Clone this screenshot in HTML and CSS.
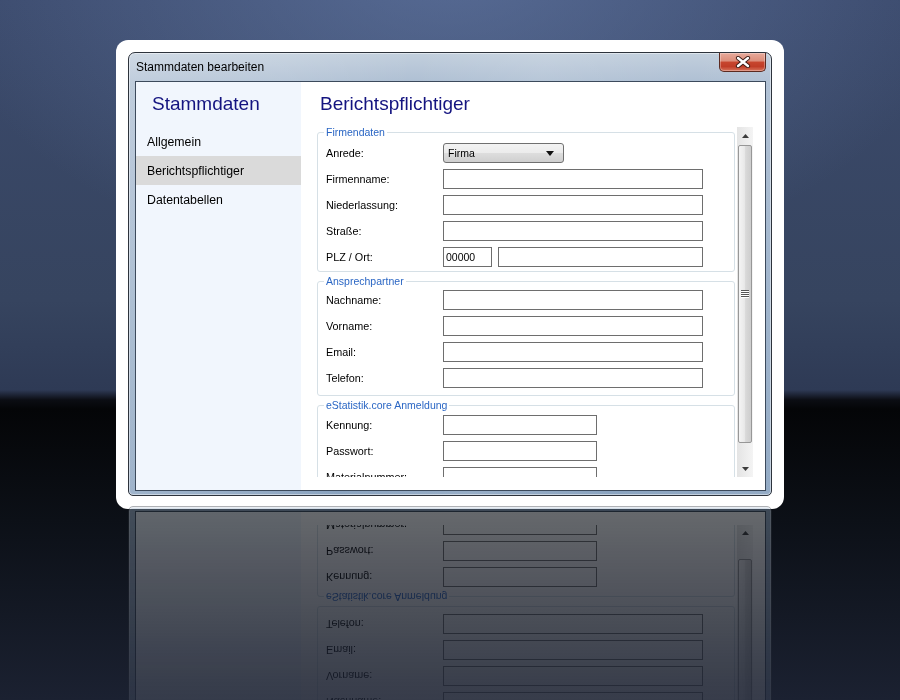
FILE: index.html
```html
<!DOCTYPE html>
<html lang="de">
<head>
<meta charset="utf-8">
<title>Stammdaten bearbeiten</title>
<link rel="stylesheet" href="styles.css">
</head>
<body>
<div class="stage">
  <div class="card">
    <div class="window">
      <div class="titlebar">
        <span class="title">Stammdaten bearbeiten</span>
        <button class="close" type="button" aria-label="Schließen">
          <svg width="16" height="12" viewBox="0 0 16 12">
            <path d="M3 2 L13 10 M13 2 L3 10" stroke="#3a1a14" stroke-width="4.2" stroke-linecap="round" fill="none"/>
            <path d="M3 2 L13 10 M13 2 L3 10" stroke="#ffffff" stroke-width="2.4" stroke-linecap="round" fill="none"/>
          </svg>
        </button>
      </div>
      <div class="client">
        <nav class="nav">
          <h2 class="nav-title">Stammdaten</h2>
          <ul class="nav-list">
            <li class="nav-item">Allgemein</li>
            <li class="nav-item active">Berichtspflichtiger</li>
            <li class="nav-item">Datentabellen</li>
          </ul>
        </nav>
        <main class="main">
          <h1 class="main-title">Berichtspflichtiger</h1>
          <div class="scroller">
            <div class="scroll-content">
              <fieldset class="group g1">
                <legend>Firmendaten</legend>
                <div class="row"><label class="lbl">Anrede:</label>
                  <div class="combo"><span>Firma</span>
                    <svg width="8" height="5" viewBox="0 0 8 5"><path d="M0 0 H8 L4 5 Z" fill="#111"/></svg>
                  </div>
                </div>
                <div class="row"><label class="lbl">Firmenname:</label><div class="field w-full"></div></div>
                <div class="row"><label class="lbl">Niederlassung:</label><div class="field w-full"></div></div>
                <div class="row"><label class="lbl">Straße:</label><div class="field w-full"></div></div>
                <div class="row"><label class="lbl">PLZ / Ort:</label><div class="field w-plz">00000</div><div class="field w-ort"></div></div>
              </fieldset>
              <fieldset class="group g2">
                <legend>Ansprechpartner</legend>
                <div class="row"><label class="lbl">Nachname:</label><div class="field w-full"></div></div>
                <div class="row"><label class="lbl">Vorname:</label><div class="field w-full"></div></div>
                <div class="row"><label class="lbl">Email:</label><div class="field w-full"></div></div>
                <div class="row"><label class="lbl">Telefon:</label><div class="field w-full"></div></div>
              </fieldset>
              <fieldset class="group g3">
                <legend>eStatistik.core Anmeldung</legend>
                <div class="row"><label class="lbl">Kennung:</label><div class="field w-mid"></div></div>
                <div class="row"><label class="lbl">Passwort:</label><div class="field w-mid"></div></div>
                <div class="row"><label class="lbl">Materialnummer:</label><div class="field w-mid"></div></div>
              </fieldset>
            </div>
            <div class="scrollbar">
              <div class="sb-btn">
                <svg width="7" height="4" viewBox="0 0 7 4"><path d="M0 4 L3.5 0 L7 4 Z" fill="#3c3c3c"/></svg>
              </div>
              <div class="sb-track">
                <div class="sb-thumb">
                  <svg width="8" height="8" viewBox="0 0 8 8">
                    <path d="M0 0.5 H8 M0 2.5 H8 M0 4.5 H8 M0 6.5 H8" stroke="#555" stroke-width="1"/>
                    <path d="M0 1.5 H8 M0 3.5 H8 M0 5.5 H8 M0 7.5 H8" stroke="#fff" stroke-width="1"/>
                  </svg>
                </div>
              </div>
              <div class="sb-btn">
                <svg width="7" height="4" viewBox="0 0 7 4"><path d="M0 0 L7 0 L3.5 4 Z" fill="#3c3c3c"/></svg>
              </div>
            </div>
          </div>
        </main>
      </div>
    </div>
  </div>
</div>
</body>
</html>
```
FILE: styles.css
```css
html, body {
  margin: 0;
  padding: 0;
}

body {
  width: 900px;
  height: 700px;
  overflow: hidden;
  font-family: "Liberation Sans", Arial, sans-serif;
  background:
    radial-gradient(ellipse 520px 320px at 450px -40px, rgba(110, 134, 182, 0.55), rgba(110, 134, 182, 0) 100%),
    linear-gradient(to bottom, #3b4a6c 0px, #36445f 300px, #2e3a55 390px, #0b0d13 400px, #040507 409px, #0c1017 520px, #1b2131 700px);
}

.stage {
  display: flex;
  justify-content: center;
  padding-top: 40px;
}

.card {
  width: 668px;
  box-sizing: border-box;
  background: #ffffff;
  border-radius: 12px;
  padding: 12px 12px 13px;
}

.window {
  height: 444px;
  box-sizing: border-box;
  border: 1px solid #2d333c;
  border-radius: 7px 7px 5px 5px;
  background:
    linear-gradient(100deg, rgba(255,255,255,0.22) 0%, rgba(255,255,255,0.12) 22%, rgba(255,255,255,0) 40%, rgba(255,255,255,0.1) 58%, rgba(255,255,255,0) 78%, rgba(255,255,255,0.08) 100%),
    linear-gradient(to bottom, #c2cfdd 0px, #aebfd3 30px, #9ab0c9 250px, #8ba4c0 444px);
  box-shadow: inset 0 0 0 1px rgba(255, 255, 255, 0.45);
  display: flex;
  flex-direction: column;
  -webkit-box-reflect: below 10px linear-gradient(to bottom, rgba(0,0,0,0) 25%, rgba(0,0,0,0.14) 60%, rgba(0,0,0,0.38) 100%);
}

.titlebar {
  height: 28px;
  display: flex;
  align-items: flex-start;
  padding: 0 5px 0 7px;
}

.title {
  line-height: 29px;
  font-size: 12px;
  color: #000;
}

.close {
  margin-left: auto;
  width: 47px;
  height: 19px;
  padding: 0;
  box-sizing: border-box;
  border: 1px solid #5c2a20;
  border-top: none;
  border-radius: 0 0 5px 5px;
  background: linear-gradient(to bottom, #e8aa9b 0%, #dc8d7a 45%, #c7462e 50%, #c03d27 75%, #d7745c 100%);
  box-shadow: inset 0 0 0 1px rgba(255, 255, 255, 0.3);
  display: flex;
  align-items: center;
  justify-content: center;
}

.client {
  height: 410px;
  box-sizing: border-box;
  margin: 0 5px 0 6px;
  border: 1px solid #3c4a5c;
  background: #ffffff;
  display: flex;
}

.nav {
  width: 165px;
  background: #f1f6fd;
}

.nav-title {
  margin: 0;
  padding: 10px 0 0 16px;
  height: 24px;
  line-height: 24px;
  font-size: 19px;
  font-weight: normal;
  color: #141480;
}

.nav-list {
  list-style: none;
  margin: 11px 0 0;
  padding: 0;
}

.nav-item {
  height: 29px;
  line-height: 31px;
  padding-left: 11px;
  font-size: 12.3px;
  color: #000;
}

.nav-item.active {
  background: #dadada;
}

.main {
  flex: 1;
  padding: 10px 12px 0 16px;
  min-width: 0;
}

.main-title {
  margin: 0 0 0 3px;
  height: 24px;
  line-height: 24px;
  font-size: 19px;
  font-weight: normal;
  color: #141480;
}

.scroller {
  margin-top: 10px;
  height: 351px;
  display: flex;
  gap: 2px;
}

.scroll-content {
  flex: 1;
  overflow: hidden;
}

.group {
  margin: 0;
  padding: 5px 0 4px 8px;
  border: 1px solid #d6e0e6;
  border-radius: 3px;
  min-width: 0;
}

.g2 {
  margin-top: 3px;
  padding-top: 3px;
  padding-bottom: 7px;
}

.g3 {
  margin-top: 3px;
  padding-top: 4px;
  padding-bottom: 8px;
}

.group legend {
  padding: 0 2px;
  margin-left: -2px;
  font-size: 10.5px;
  line-height: 12px;
  color: #2a66c4;
}

.row {
  display: flex;
  align-items: center;
  height: 20px;
  gap: 6px;
}

.row + .row {
  margin-top: 6px;
}

.lbl {
  width: 111px;
  font-size: 10.8px;
  color: #000;
}

.field {
  height: 20px;
  box-sizing: border-box;
  border: 1px solid #6e6e6e;
  background: #fff;
  font-size: 10.5px;
  line-height: 18px;
  padding-left: 2px;
  color: #000;
}

.w-full { width: 260px; }
.w-mid { width: 154px; }
.w-plz { width: 49px; }
.w-ort { width: 205px; }

.combo {
  width: 121px;
  height: 20px;
  box-sizing: border-box;
  border: 1px solid #707070;
  border-radius: 3px;
  background: linear-gradient(to bottom, #f3f3f3 0%, #ebebeb 50%, #dddddd 51%, #cfcfcf 100%);
  display: flex;
  align-items: center;
  justify-content: space-between;
  padding: 0 9px 0 4px;
  font-size: 10.5px;
}

.scrollbar {
  width: 16px;
  margin-top: 1px;
  height: 350px;
  display: flex;
  flex-direction: column;
  background: linear-gradient(to right, #e4e4e4, #f4f4f4);
}

.sb-btn {
  height: 17px;
  display: flex;
  align-items: center;
  justify-content: center;
}

.sb-track {
  flex: 1;
  padding: 1px 1px 0;
}

.sb-thumb {
  height: 298px;
  box-sizing: border-box;
  border: 1px solid #979797;
  border-radius: 2px;
  background: linear-gradient(to right, #f4f4f4 0%, #e9e9e9 45%, #d9d9d9 55%, #cdcdcd 100%);
  display: flex;
  align-items: center;
  justify-content: center;
}
```
